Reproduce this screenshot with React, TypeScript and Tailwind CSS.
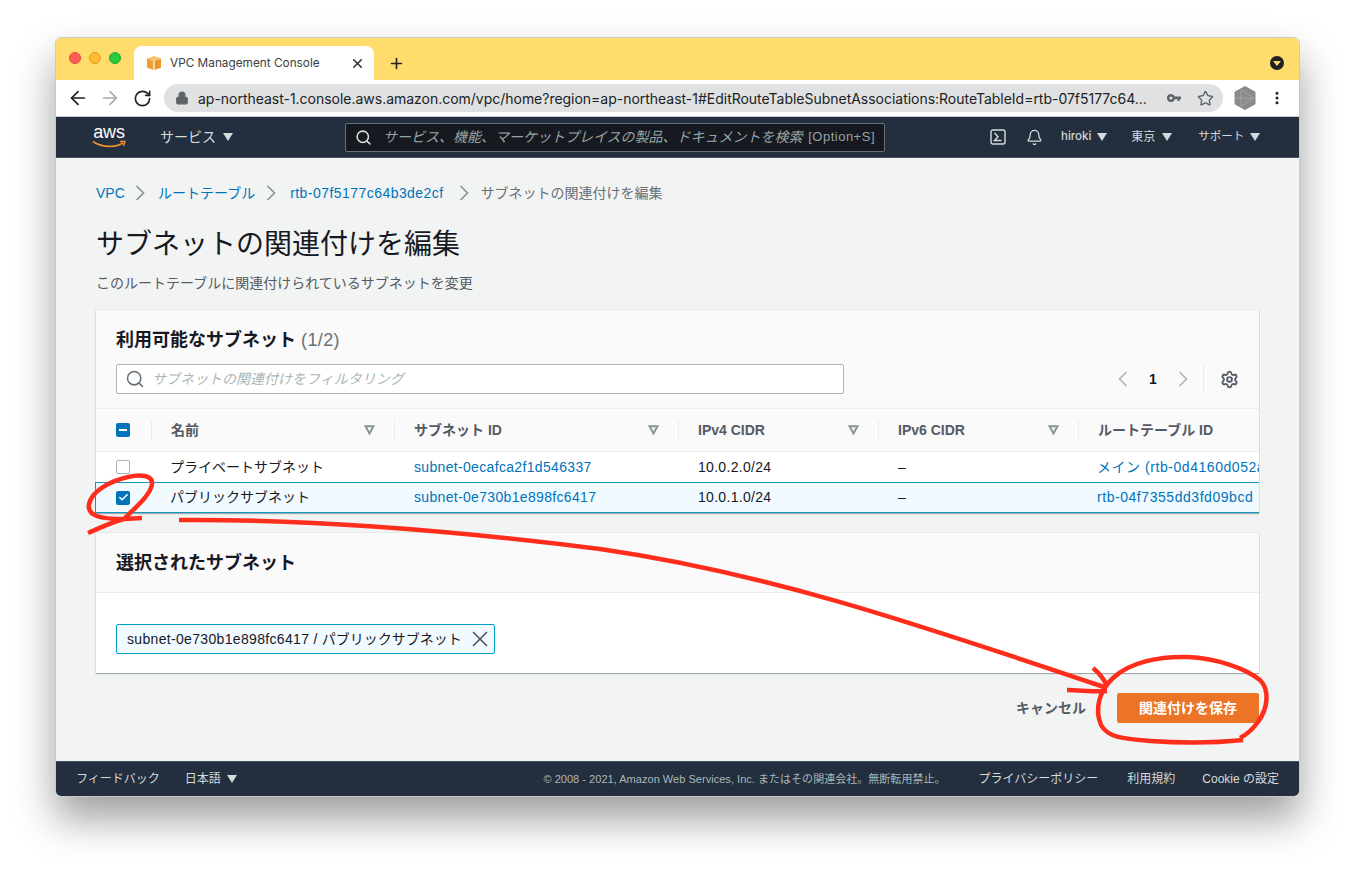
import { ArrowLeft, ArrowRight, RotateCw, Lock, Star, EllipsisVertical, X, Plus, Search, Settings, Bell, Check } from "lucide-react"

const caret = "w-0 h-0 border-l-[5px] border-r-[5px] border-t-[8px] border-l-transparent border-r-transparent"

function Caret({ className = "border-t-[#d5dbdb]" }: { className?: string }) {
  return <span className={`inline-block ${caret} ${className}`} />
}

function SortIcon() {
  return (
    <svg width="11" height="10" viewBox="0 0 11 10" className="shrink-0">
      <path d="M1.5 1.2 H9.5 L5.5 8.5 Z" fill="none" stroke="#879596" strokeWidth="2" />
    </svg>
  )
}

function Chevron({ dir = "right", color = "#879596" }: { dir?: "left" | "right"; color?: string }) {
  return (
    <svg width="10" height="16" viewBox="0 0 10 16" className="shrink-0">
      <path d={dir === "right" ? "M1.5 1 L8.5 8 L1.5 15" : "M8.5 1 L1.5 8 L8.5 15"} fill="none" stroke={color} strokeWidth="1.7" />
    </svg>
  )
}

function Divider() {
  return <span className="w-px h-[20px] bg-[#eaeded]" />
}

function HeadCell({ label, width }: { label: string; width: string }) {
  return (
    <div className={`flex items-center h-full ${width}`}>
      <Divider />
      <div className="flex-1 flex items-center justify-between pl-[19px] pr-[19px] text-[14px] font-bold text-[#545b64]">
        <span>{label}</span>
        <SortIcon />
      </div>
    </div>
  )
}

function Row({ name, subnet, cidr, route, selected }: { name: string; subnet: string; cidr: string; route: string; selected?: boolean }) {
  return (
    <div className={`flex items-center text-[14px] whitespace-nowrap overflow-hidden ${selected ? "h-[31px] bg-[#f1faff] border border-[#1298bd] border-r-0 -ml-px" : "h-[30px] bg-white"}`}>
      <div className="w-[55px] pl-[20px] flex items-center shrink-0">
        {selected ? (
          <span className="w-[14px] h-[14px] rounded-[2px] bg-[#0073bb] flex items-center justify-center">
            <Check size={11} strokeWidth={3.5} color="white" />
          </span>
        ) : (
          <span className="w-[14px] h-[14px] rounded-[2px] border border-[#aab7b8] bg-white" />
        )}
      </div>
      <div className="w-[243px] pl-[19px] text-[#16191f] shrink-0">{name}</div>
      <div className="w-[284px] pl-[20px] text-[#0073bb] tracking-[0.33px] shrink-0">{subnet}</div>
      <div className="w-[200px] pl-[20px] text-[#16191f] tracking-[0.3px] shrink-0">{cidr}</div>
      <div className="w-[200px] pl-[20px] text-[#16191f] shrink-0">–</div>
      <div className="pl-[19px] text-[#0073bb] tracking-[0.55px] shrink-0">{route}</div>
    </div>
  )
}

export default function App() {
  return (
    <div className="relative w-[1355px] h-[870px] bg-white overflow-hidden" style={{ fontFamily: '"Liberation Sans", "Noto Sans CJK JP", sans-serif' }}>
      <div className="pt-[37px] pl-[55px]">
        <div className="w-[1245px] h-[760px] rounded-[6px] overflow-hidden flex flex-col border border-[#c9c9c9] shadow-[0_22px_40px_rgba(0,0,0,0.38)]">
          {/* Tab strip */}
          <div className="h-[42px] bg-[#ffdc6b] flex items-end relative shrink-0">
            <div className="flex items-center gap-[8px] pl-[13px] h-[42px] pb-[3px]">
              <span className="w-[12px] h-[12px] rounded-full bg-[#ff5f57] border border-[#e0443e]" />
              <span className="w-[12px] h-[12px] rounded-full bg-[#febc2e] border border-[#dea123]" />
              <span className="w-[12px] h-[12px] rounded-full bg-[#28c840] border border-[#1aab29]" />
            </div>
            <div className="ml-[13px] w-[240px] h-[34px] bg-white rounded-t-[8px] flex items-center pl-[12px] pr-[9px]">
              <svg width="16" height="16" viewBox="0 0 16 16" className="shrink-0">
                <path d="M8 1 L15 3.5 L8 6 L1 3.5 Z" fill="#f5c36b" />
                <path d="M1 3.5 L7.4 6 V15 L1 12.5 Z" fill="#ef9f2f" />
                <path d="M15 3.5 L8.6 6 V15 L15 12.5 Z" fill="#e8952a" />
              </svg>
              <span className="ml-[8px] pt-[2px] flex-1 text-[11.8px] text-[#3c4043]" style={{ fontFamily: "Inter, sans-serif" }}>VPC Management Console</span>
              <X size={15} strokeWidth={2.6} color="#333" />
            </div>
            <div className="ml-[14px] h-[34px] flex items-center">
              <Plus size={17} strokeWidth={2.3} color="#222" />
            </div>
            <div className="ml-auto mr-[15px] mb-[10px] w-[14px] h-[14px] rounded-full bg-[#202124] flex items-center justify-center">
              <span className="inline-block w-0 h-0 border-l-[4px] border-r-[4px] border-t-[5px] border-l-transparent border-r-transparent border-t-[#ffdc6b]" />
            </div>
          </div>
          {/* Toolbar */}
          <div className="h-[37px] bg-white flex items-center shrink-0 border-b border-[#c8c8c8]">
            <div className="w-[108px] flex items-center pl-[6px] shrink-0">
              <span className="w-[32px] flex justify-center"><ArrowLeft size={22} strokeWidth={1.9} color="#202124" /></span>
              <span className="w-[32px] flex justify-center"><ArrowRight size={22} strokeWidth={1.9} color="#a9a9a9" /></span>
              <span className="w-[32px] flex justify-center"><RotateCw size={19} strokeWidth={2.1} color="#202124" /></span>
            </div>
            <div className="w-[1059px] h-[28px] rounded-full bg-[#dfe1e3] flex items-center pl-[11px] pr-[9px] shrink-0">
              <Lock size={14} color="#5f6368" fill="#5f6368" />
              <span className="ml-[9px] flex-1 text-[14px] text-[#202124] whitespace-nowrap tracking-[-0.02px]" style={{ fontFamily: "Inter, sans-serif" }}>ap-northeast-1.console.aws.amazon.com/vpc/home?region=ap-northeast-1#EditRouteTableSubnetAssociations:RouteTableId=rtb-07f5177c64...</span>
              <svg width="14" height="8" viewBox="0 0 14 8" className="shrink-0">
                <path fillRule="evenodd" d="M4 0 A4 4 0 0 1 7.8 2.6 H14 V5.2 H12.6 V7 H10.4 V5.2 H7.8 A4 4 0 1 1 4 0 Z M4 2.4 A1.6 1.6 0 1 0 4 5.6 A1.6 1.6 0 1 0 4 2.4 Z" fill="#5f6368" />
              </svg>
              <Star size={17} color="#5f6368" strokeWidth={1.9} className="ml-[16px] shrink-0" />
            </div>
            <svg width="22" height="24" viewBox="0 0 22 24" className="ml-[11px] shrink-0">
              <path d="M11 0.5 L21 6 V18 L11 23.5 L1 18 V6 Z" fill="#8a8a8a" stroke="#8a8a8a" strokeLinejoin="round" />
              <path d="M7 4 V20 M7 4 L20 12 L7 20 M1 12 H20" stroke="#a3a3a3" strokeWidth="1" fill="none" />
            </svg>
            <EllipsisVertical size={16} strokeWidth={2.6} color="#202124" className="ml-[13px]" />
          </div>
          {/* AWS nav */}
          <div className="h-[41px] bg-[#232f3e] flex items-center text-[#d5dbdb] shrink-0 border-b border-[#49535f] relative">
            <div className="ml-[36px] w-[34px] flex flex-col items-center shrink-0">
              <span className="text-[18px] leading-[15px] font-normal text-white tracking-[-0.2px]">aws</span>
              <svg width="34" height="9" viewBox="0 0 34 9">
                <path d="M1 1.5 C9 7.5 23 8 31 3" fill="none" stroke="#ec912d" strokeWidth="1.6" />
                <path d="M28 1.5 L33 1.5 L31.5 6" fill="none" stroke="#ec912d" strokeWidth="1.4" />
              </svg>
            </div>
            <div className="ml-[34px] flex items-center gap-[7px] text-[14px] w-[185px] shrink-0">
              <span>サービス</span>
              <Caret />
            </div>
            <div className="w-[540px] h-[29px] bg-[#16191f] border border-[#687078] rounded-[2px] flex items-center pl-[9px] pr-[9px] shrink-0">
              <Search size={17} strokeWidth={2.3} color="#d5dbdb" />
              <span className="ml-[11px] flex-1 italic text-[14px] text-[#95a5a6] whitespace-nowrap">サービス、機能、マーケットプレイスの製品、ドキュメントを検索</span>
              <span className="text-[13px] text-[#95a5a6] whitespace-nowrap tracking-[0.5px]">[Option+S]</span>
            </div>
            <svg width="16" height="16" viewBox="0 0 16 16" className="ml-[105px] shrink-0">
              <rect x="1" y="1" width="14" height="14" rx="2" fill="none" stroke="#d5dbdb" strokeWidth="1.4" />
              <path d="M4.5 4 L8 7.8 L4.5 11.5 H11.5" fill="none" stroke="#d5dbdb" strokeWidth="1.4" />
            </svg>
            <Bell size={17} strokeWidth={1.8} color="#d5dbdb" className="ml-[20px] shrink-0" />
            <span className="ml-[18px] text-[11.5px] font-medium" style={{ fontFamily: "Inter, sans-serif" }}>hiroki</span>
            <span className="ml-[6px] flex"><Caret /></span>
            <span className="ml-[24px] text-[12px]">東京</span>
            <span className="ml-[7px] flex"><Caret /></span>
            <span className="ml-[26px] text-[11.5px]">サポート</span>
            <span className="ml-[6px] flex"><Caret /></span>
          </div>
          {/* Page */}
          <div className="flex-1 bg-[#f2f3f3] pt-[26px] px-[40px] flex flex-col">
            <div className="flex items-center h-[18px] text-[14px] text-[#0073bb] whitespace-nowrap">
              <span className="w-[26px]">VPC</span>
              <span className="ml-[13px] mr-[13px]"><Chevron /></span>
              <span>ルートテーブル</span>
              <span className="ml-[11px] mr-[14px]"><Chevron /></span>
              <span className="tracking-[0.45px]">rtb-07f5177c64b3de2cf</span>
              <span className="ml-[15px] mr-[12px]"><Chevron /></span>
              <span className="text-[#687078]">サブネットの関連付けを編集</span>
            </div>
            <h1 className="mt-[24px] text-[28px] leading-[38px] font-normal text-[#16191f]">サブネットの関連付けを編集</h1>
            <p className="mt-[9px] text-[14px] leading-[20px] text-[#545b64]">このルートテーブルに関連付けられているサブネットを変更</p>

            {/* Available subnets */}
            <div className="mt-[17px] shadow-[0_1px_1px_rgba(0,28,36,0.3),0_0_1px_rgba(0,28,36,0.25)]">
              <div className="h-[99px] bg-[#fafafa] border-b border-[#eaeded] px-[20px] pt-[18px]">
                <div className="text-[18px] leading-[24px] font-bold text-[#16191f]">
                  利用可能なサブネット <span className="font-normal text-[#687078] tracking-[0.4px]">(1/2)</span>
                </div>
                <div className="mt-[12px] flex items-center">
                  <div className="w-[728px] h-[30px] bg-white border border-[#aab7b8] rounded-[2px] flex items-center pl-[8px]">
                    <Search size={20} strokeWidth={1.9} color="#687078" />
                    <span className="ml-[7px] italic text-[14px] text-[#aab7b8]">サブネットの関連付けをフィルタリング</span>
                  </div>
                  <div className="ml-auto flex items-center">
                    <Chevron dir="left" color="#aab7b8" />
                    <span className="w-[50px] text-center text-[14px] font-bold text-[#16191f]">1</span>
                    <Chevron color="#aab7b8" />
                    <span className="ml-[15px] w-px h-[30px] bg-[#eaeded]" />
                    <Settings size={19} strokeWidth={2.4} color="#545b64" className="ml-[16px]" />
                  </div>
                </div>
              </div>
              <div className="h-[43px] bg-[#fafafa] border-b border-[#eaeded] flex items-center whitespace-nowrap overflow-hidden">
                <div className="w-[55px] pl-[20px] flex items-center shrink-0">
                  <span className="w-[14px] h-[14px] rounded-[2px] bg-[#0073bb] flex items-center justify-center">
                    <span className="w-[8px] h-[2px] bg-white" />
                  </span>
                </div>
                <HeadCell label="名前" width="w-[243px] shrink-0" />
                <HeadCell label="サブネット ID" width="w-[284px] shrink-0" />
                <HeadCell label="IPv4 CIDR" width="w-[200px] shrink-0" />
                <HeadCell label="IPv6 CIDR" width="w-[200px] shrink-0" />
                <div className="flex items-center h-full">
                  <Divider />
                  <span className="pl-[19px] text-[14px] font-bold text-[#545b64]">ルートテーブル ID</span>
                </div>
              </div>
              <Row name="プライベートサブネット" subnet="subnet-0ecafca2f1d546337" cidr="10.0.2.0/24" route="メイン (rtb-0d4160d052a" />
              <Row selected name="パブリックサブネット" subnet="subnet-0e730b1e898fc6417" cidr="10.0.1.0/24" route="rtb-04f7355dd3fd09bcd" />
            </div>

            {/* Selected subnets */}
            <div className="mt-[20px] shadow-[0_1px_1px_rgba(0,28,36,0.3),0_0_1px_rgba(0,28,36,0.25)] bg-white">
              <div className="h-[60px] bg-[#fafafa] border-b border-[#eaeded] px-[20px] pt-[1px] flex items-center text-[18px] font-bold text-[#16191f]">選択されたサブネット</div>
              <div className="h-[80px] px-[20px] pt-[31px]">
                <div className="inline-flex items-center h-[30px] bg-[#f1faff] border border-[#00a1c9] rounded-[2px] pl-[10px] pr-[1px] text-[14px] text-[#16191f]">
                  <span className="tracking-[0.33px]">subnet-0e730b1e898fc6417 /</span>
                  <span className="ml-[4px]">パブリックサブネット</span>
                  <X size={26} strokeWidth={1.6} color="#545b64" className="ml-[5px]" />
                </div>
              </div>
            </div>

            {/* Actions */}
            <div className="mt-[20px] flex items-center justify-end">
              <span className="text-[14px] font-bold text-[#545b64]">キャンセル</span>
              <button className="ml-[31px] w-[142px] h-[30px] bg-[#ec7427] rounded-[2px] text-[14px] font-bold text-white">関連付けを保存</button>
            </div>
          </div>
          {/* Footer */}
          <div className="h-[35px] bg-[#232f3e] border-t border-[#49535f] flex items-center text-[#d5dbdb] text-[12px] whitespace-nowrap shrink-0 pl-[20px] pr-[20px]">
            <span>フィードバック</span>
            <span className="ml-[25px]">日本語</span>
            <span className="ml-[6px] flex"><Caret /></span>
            <span className="ml-auto text-[11px] text-[#aab7b8] tracking-[0.03px]">© 2008 - 2021, Amazon Web Services, Inc. またはその関連会社。無断転用禁止。</span>
            <span className="ml-[33px]">プライバシーポリシー</span>
            <span className="ml-[29px]">利用規約</span>
            <span className="ml-[27px]">Cookie の設定</span>
          </div>
        </div>
      </div>
      {/* Red annotation */}
      <svg width="1355" height="870" viewBox="0 0 1355 870" className="absolute inset-0 pointer-events-none" fill="none" stroke="#ff2d1c" strokeWidth="4.5" strokeLinecap="butt" strokeLinejoin="round">
        <path d="M88 533 C102 527 112 522 124 519 C132 510 150 497 152 484 C153 475 140 474 128 477 C110 481 92 491 89 504 C87 516 100 519 124 519 L142 518" />
        <path d="M179 520 C300 519 450 530 600 549 C760 572 900 618 1107 688" />
        <path d="M1093 668 C1099 673 1104 679 1107 686 M1067 690 C1080 690 1094 692 1107 691" />
        <path d="M1243 740 C1215 743 1180 743 1150 741 C1125 739 1108 738 1101 725 C1094 708 1100 690 1113 678 C1130 662 1160 656 1188 657 C1215 658 1245 668 1260 680 C1270 690 1268 708 1258 722 C1252 730 1246 735 1240 738" />
      </svg>
    </div>
  )
}
